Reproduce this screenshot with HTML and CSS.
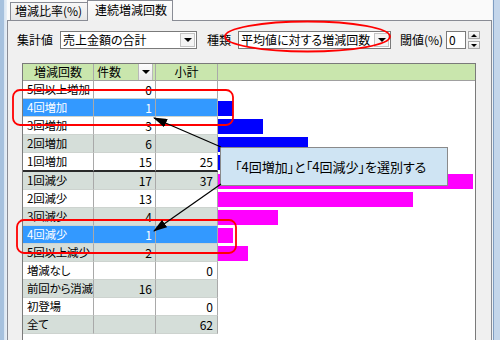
FILE: index.html
```html
<!DOCTYPE html>
<html lang="ja">
<head>
<meta charset="utf-8">
<title>連続増減回数</title>
<link rel="stylesheet" href="styles.css">
</head>
<body>
<div class="window">
  <div class="frame-l"></div>
  <div class="main">
    <div class="tabs">
      <div class="tab">増減比率(%)</div>
      <div class="tab active">連続増減回数</div>
    </div>
    <div class="panel">
      <div class="controls">
        <span class="lbl lbl-agg">集計値</span>
        <div class="combo combo-agg"><span class="combo-text">売上金額の合計</span><span class="combo-btn"><i class="tri-down"></i></span></div>
        <span class="lbl lbl-kind">種類</span>
        <div class="combo combo-kind"><span class="combo-text">平均値に対する増減回数</span><span class="combo-btn"><i class="tri-down"></i></span></div>
        <span class="lbl lbl-th">閾値(%)</span>
        <div class="spin-input">0</div>
        <div class="spin-btns"><span class="sb"><i class="tri-up-s"></i></span><span class="sb"><i class="tri-down-s"></i></span></div>
      </div>
      <div class="grid">
        <div class="row head">
          <div class="c c1">増減回数</div>
          <div class="c c2"><span>件数</span><span class="hbtn"><i class="tri-down"></i></span></div>
          <div class="c c3">小計</div>
          <div class="c chart"></div>
        </div>
        <div class="row">
          <div class="c c1">5回以上増加</div><div class="c c2">0</div><div class="c c3"></div>
          <div class="c chart"></div>
        </div>
        <div class="row sel">
          <div class="c c1">4回増加</div><div class="c c2">1</div><div class="c c3"></div>
          <div class="c chart"><div class="bar up" style="width:15px"></div></div>
        </div>
        <div class="row">
          <div class="c c1">3回増加</div><div class="c c2">3</div><div class="c c3"></div>
          <div class="c chart"><div class="bar up" style="width:45px"></div></div>
        </div>
        <div class="row alt">
          <div class="c c1">2回増加</div><div class="c c2">6</div><div class="c c3"></div>
          <div class="c chart"><div class="bar up" style="width:90px"></div></div>
        </div>
        <div class="row sep">
          <div class="c c1">1回増加</div><div class="c c2">15</div><div class="c c3">25</div>
          <div class="c chart"><div class="bar up" style="width:225px"></div></div>
        </div>
        <div class="row alt">
          <div class="c c1">1回減少</div><div class="c c2">17</div><div class="c c3">37</div>
          <div class="c chart"><div class="bar dn" style="width:255px"></div></div>
        </div>
        <div class="row">
          <div class="c c1">2回減少</div><div class="c c2">13</div><div class="c c3"></div>
          <div class="c chart"><div class="bar dn" style="width:195px"></div></div>
        </div>
        <div class="row alt">
          <div class="c c1">3回減少</div><div class="c c2">4</div><div class="c c3"></div>
          <div class="c chart"><div class="bar dn" style="width:60px"></div></div>
        </div>
        <div class="row sel">
          <div class="c c1">4回減少</div><div class="c c2">1</div><div class="c c3"></div>
          <div class="c chart"><div class="bar dn" style="width:15px"></div></div>
        </div>
        <div class="row alt">
          <div class="c c1">5回以上減少</div><div class="c c2">2</div><div class="c c3"></div>
          <div class="c chart"><div class="bar dn" style="width:30px"></div></div>
        </div>
        <div class="row">
          <div class="c c1">増減なし</div><div class="c c2"></div><div class="c c3">0</div>
          <div class="c chart"></div>
        </div>
        <div class="row alt">
          <div class="c c1">前回から消滅</div><div class="c c2">16</div><div class="c c3"></div>
          <div class="c chart"></div>
        </div>
        <div class="row">
          <div class="c c1">初登場</div><div class="c c2"></div><div class="c c3">0</div>
          <div class="c chart"></div>
        </div>
        <div class="row alt">
          <div class="c c1">全て</div><div class="c c2"></div><div class="c c3">62</div>
          <div class="c chart"></div>
        </div>
      </div>
    </div>
  </div>
  <div class="frame-r"></div>
</div>

<div class="callout">「4回増加」と「4回減少」を選別する</div>

<svg class="annot" width="500" height="340" viewBox="0 0 500 340" xmlns="http://www.w3.org/2000/svg">
  <defs>
    <marker id="ah" markerUnits="userSpaceOnUse" markerWidth="14" markerHeight="9" refX="13" refY="4.5" orient="auto">
      <path d="M0,0 L14,4.5 L0,9 Z" fill="#000"/>
    </marker>
  </defs>
  <ellipse cx="130" cy="6" rx="43" ry="13" fill="none" stroke="#f00" stroke-width="1.8"/>
  <ellipse cx="307.5" cy="36.5" rx="82.5" ry="15" fill="none" stroke="#f00" stroke-width="1.8"/>
  <rect x="13" y="90" width="220" height="35" rx="7" ry="7" fill="none" stroke="#f00" stroke-width="1.8"/>
  <rect x="17" y="220" width="219" height="33" rx="7" ry="7" fill="none" stroke="#f00" stroke-width="1.8"/>
  <line x1="221" y1="147" x2="154" y2="118" stroke="#000" stroke-width="1.2" marker-end="url(#ah)"/>
  <line x1="221" y1="184" x2="154" y2="231" stroke="#000" stroke-width="1.2" marker-end="url(#ah)"/>
</svg>
</body>
</html>
```

FILE: styles.css
```css
* {
  box-sizing: border-box;
}

html, body {
  margin: 0;
  padding: 0;
}

body {
  width: 500px;
  height: 340px;
  overflow: hidden;
  position: relative;
  font-family: "Noto Sans CJK JP", "Noto Sans", sans-serif;
  font-size: 12px;
  color: #000;
  background: #fafafa;
}

.window {
  display: flex;
  height: 340px;
}

.frame-l {
  width: 7px;
  background: linear-gradient(to right, #a6c1de 0, #a6c1de 4px, #d6e3f1 4px, #e9f0f7 7px);
}

.frame-r {
  width: 8px;
  background: linear-gradient(to right, #eef2f6 0, #eef2f6 1px, #7f9dc2 1px, #7f9dc2 2px, #c4d6eb 2px);
}

.main {
  flex: 1;
  display: flex;
  flex-direction: column;
  min-width: 0;
}

/* ---------- tabs ---------- */
.tabs {
  height: 20px;
  display: flex;
  align-items: flex-end;
  padding-left: 3px;
  background: #fafafa;
  position: relative;
  z-index: 1;
}

.tab {
  height: 18px;
  width: 78px;
  border: 1px solid #898c95;
  border-bottom: none;
  background: linear-gradient(#f7f7f7, #e6e6e6);
  padding-left: 4px;
  line-height: 16px;
  white-space: nowrap;
}

.tab.active {
  height: 21px;
  width: 86px;
  margin-left: -1px;
  margin-bottom: -1px;
  background: linear-gradient(#fdfdfd, #f0f0f0);
  padding-left: 7px;
  line-height: 18px;
}

/* ---------- panel ---------- */
.panel {
  flex: 1;
  border: 1px solid #898c95;
  background: #f0f0f0;
  padding: 9px 0 0 9px;
}

.controls {
  display: flex;
  align-items: center;
  height: 20px;
}

.lbl {
  white-space: nowrap;
  line-height: 20px;
}

.lbl-agg {
  width: 36px;
  margin-right: 7px;
}

.lbl-kind {
  margin-left: 10px;
  width: 24px;
  margin-right: 7px;
}

.lbl-th {
  margin-left: 9px;
  width: 44px;
  margin-right: 2px;
}

.combo {
  height: 18px;
  border: 1px solid #7a7a7a;
  background: #fff;
  display: flex;
  align-items: center;
}

.combo-agg {
  width: 137px;
}

.combo-kind {
  width: 153px;
}

.combo-text {
  flex: 1;
  padding-left: 2px;
  white-space: nowrap;
  line-height: 16px;
  font-feature-settings: "palt";
}

.combo-btn {
  width: 15px;
  height: 14px;
  margin-right: 1px;
  border: 1px solid #c4c4c4;
  background: #f4f4f4;
  display: flex;
  align-items: center;
  justify-content: center;
}

.tri-down {
  display: block;
  width: 0;
  height: 0;
  border-left: 4px solid transparent;
  border-right: 4px solid transparent;
  border-top: 4px solid #000;
}

.tri-down-s {
  display: block;
  width: 0;
  height: 0;
  border-left: 3px solid transparent;
  border-right: 3px solid transparent;
  border-top: 3px solid #000;
}

.tri-up-s {
  display: block;
  width: 0;
  height: 0;
  border-left: 3px solid transparent;
  border-right: 3px solid transparent;
  border-bottom: 3px solid #000;
}

.spin-input {
  width: 20px;
  height: 18px;
  border: 1px solid #7a7a7a;
  background: #fff;
  padding-left: 2px;
  line-height: 16px;
}

.spin-btns {
  margin-left: 2px;
  width: 12px;
  height: 18px;
  display: flex;
  flex-direction: column;
  justify-content: space-between;
}

.sb {
  height: 8px;
  border: 1px solid #a8a8a8;
  background: linear-gradient(#fbfbfb, #e4e4e4);
  display: flex;
  align-items: center;
  justify-content: center;
}

/* ---------- grid ---------- */
.grid {
  margin: 13px 0 0 5px;
  width: 454px;
  height: 300px;
  border: 1px solid #7a7a7a;
  background: #fff;
}

.row {
  display: flex;
  height: 18px;
}

.c {
  height: 100%;
  border-right: 1px solid #a9a9a9;
  border-bottom: 1px solid #cdd3cf;
  line-height: 17px;
  white-space: nowrap;
  overflow: hidden;
}

.c1 {
  width: 71px;
  padding-left: 4px;
  font-size: 11.5px;
  font-feature-settings: "palt";
  letter-spacing: -0.2px;
}

.c2 {
  width: 62px;
  text-align: right;
  padding-right: 3px;
}

.c3 {
  width: 62px;
  text-align: right;
  padding-right: 4px;
}

.chart {
  width: 257px;
  border: none;
  padding-top: 2px;
}

.bar {
  height: 15px;
}

.bar.up {
  background: #0000ff;
}

.bar.dn {
  background: #ff00ff;
}

.row.head {
  height: 17px;
}

.head .c {
  background: #c9e6ad;
  border-bottom: 1px solid #a0a0a0;
  text-align: center;
  line-height: 16px;
  padding: 0;
}

.head .c1 {
  font-size: 12px;
  letter-spacing: 0;
}

.head .chart {
  border-bottom: 1px solid #a0a0a0;
}

.head .c2 {
  display: flex;
  justify-content: space-between;
  align-items: center;
  padding-left: 3px;
  padding-right: 2px;
}

.hbtn {
  width: 15px;
  height: 16px;
  border-left: 1px solid #b8b8b8;
  border-right: 1px solid #b8b8b8;
  background: linear-gradient(#fdfdfd, #e8e8e8);
  display: flex;
  align-items: center;
  justify-content: center;
}

.alt .c1,
.alt .c2,
.alt .c3 {
  background: #d5ded9;
}

.sel .c1,
.sel .c2,
.sel .c3 {
  background: #3399ff;
  color: #fff;
}

.row.sep {
  height: 19px;
}

.sep .c1,
.sep .c2,
.sep .c3 {
  border-bottom: 2px solid #2a2a2a;
}

/* ---------- annotations ---------- */
.callout {
  position: absolute;
  left: 220px;
  top: 147px;
  width: 228px;
  height: 39px;
  background: #cfe4f3;
  border: 1px solid #8a8a8a;
  padding-left: 14px;
  line-height: 37px;
  font-size: 13px;
  font-feature-settings: "palt";
  white-space: nowrap;
}

.annot {
  position: absolute;
  left: 0;
  top: 0;
  pointer-events: none;
}
```
